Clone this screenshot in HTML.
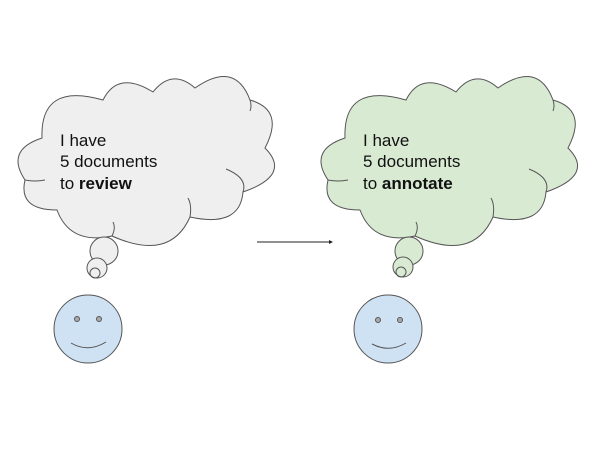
<!DOCTYPE html>
<html><head><style>
body{margin:0;background:#fff;width:600px;height:450px;overflow:hidden}
svg{display:block}
text{font-family:"Liberation Sans",sans-serif;font-size:17px;fill:#111}
</style></head><body>
<svg width="600" height="450" viewBox="0 0 600 450">
<defs>
<path id="cloud" d="M42,138 Q40,82 103,100 Q118,70 153,92 Q172,68 195,88 Q235,60 250,100 Q285,110 265,148 Q292,175 243,192 Q240,228 190,217 Q170,262 112,236 Q70,245 57,210 Q18,210 25,180 Q5,150 42,138 Z"/>
</defs>
<g stroke="#555" stroke-width="1">
<use href="#cloud" fill="#efefef"/>
<path d="M226,169 Q248,178 243,192 M190,217 Q192,205 188,198 M112,236 Q116,228 113,222 M25,180 Q35,182 45,180 M250,100 Q252,106 250,111" fill="none"/>
<circle cx="104" cy="251" r="14" fill="#efefef"/>
<circle cx="97" cy="268" r="10" fill="#efefef"/>
<circle cx="95" cy="273" r="5" fill="none"/>
<circle cx="88" cy="329" r="34" fill="#cfe2f3"/>
<circle cx="77" cy="319" r="2.5" fill="#aaa"/>
<circle cx="99" cy="319" r="2.5" fill="#aaa"/>
<path d="M71,343 Q88,353 106,342" fill="none"/>
</g>
<g stroke="#555" stroke-width="1" transform="translate(303,0)">
<use href="#cloud" fill="#d9ead3"/>
<path d="M226,169 Q248,178 243,192 M190,217 Q192,205 188,198 M112,236 Q116,228 113,222 M25,180 Q35,182 45,180 M250,100 Q252,106 250,111" fill="none"/>
<circle cx="106" cy="251" r="14" fill="#d9ead3"/>
<circle cx="100" cy="267" r="10" fill="#d9ead3"/>
<circle cx="98" cy="272" r="5" fill="none"/>
<circle cx="85" cy="329" r="34" fill="#cfe2f3"/>
<circle cx="75" cy="320" r="2.5" fill="#aaa"/>
<circle cx="97" cy="320" r="2.5" fill="#aaa"/>
<path d="M69,344 Q86,353 103,343" fill="none"/>
</g>
<line x1="257" y1="242" x2="331" y2="242" stroke="#222" stroke-width="1"/>
<path d="M329,240 L333,242 L329,244 Z" fill="#222"/>
<text x="60" y="146">I have</text>
<text x="60" y="167">5 documents</text>
<text x="60" y="189">to <tspan font-weight="bold">review</tspan></text>
<text x="363" y="146">I have</text>
<text x="363" y="167">5 documents</text>
<text x="363" y="189">to <tspan font-weight="bold">annotate</tspan></text>
</svg>
</body></html>
